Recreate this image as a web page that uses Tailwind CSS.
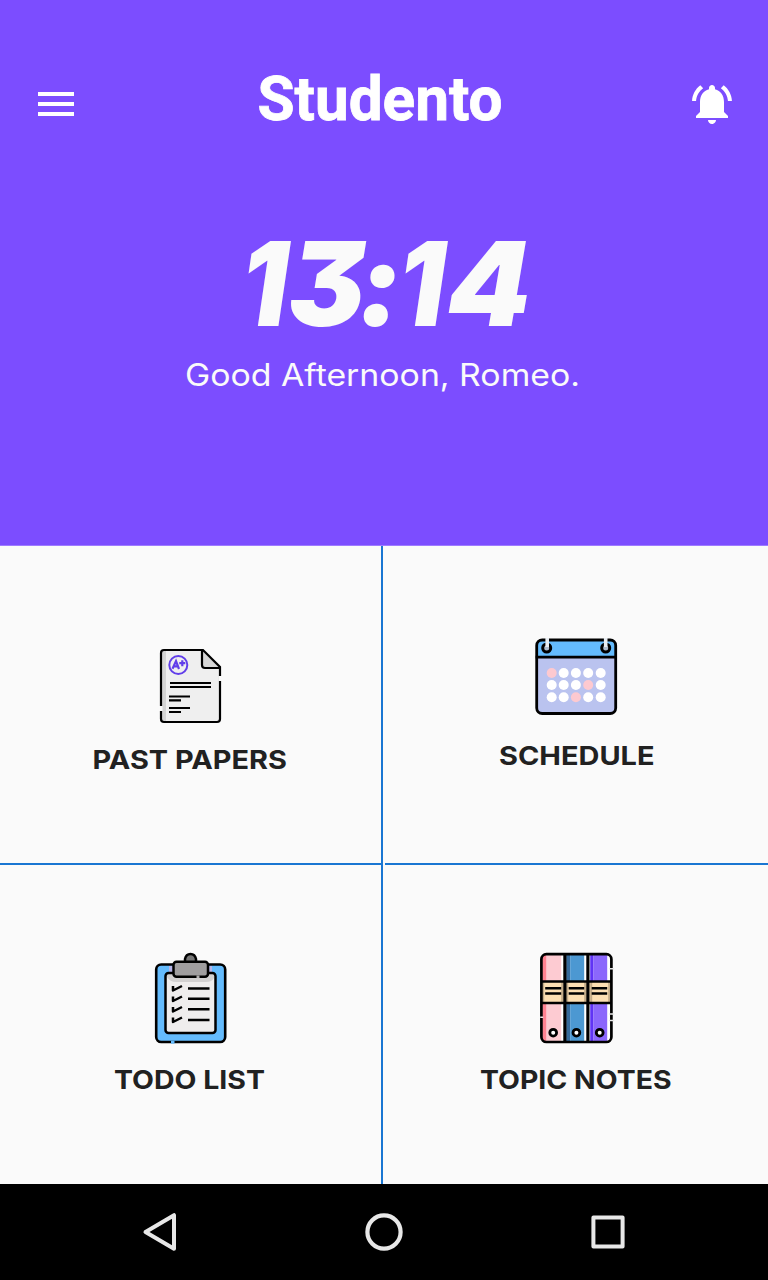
<!DOCTYPE html>
<html lang="en">
<head>
<meta charset="utf-8">
<title>Studento</title>
<script src="https://cdn.jsdelivr.net/npm/@tailwindcss/browser@4"></script>
</head>
<body class="w-[768px] h-[1280px] overflow-hidden bg-[#fafafa] font-['Inter',sans-serif] flex flex-col">
<header class="h-[546px] shrink-0 bg-[#7c4dff] border-b border-[#9e7bff] flex flex-col items-center">
  <div class="w-full h-[160px] pt-[60px] flex justify-between px-[32px]">
    <svg class="w-12 h-12 mt-5" viewBox="0 0 48 48" fill="#fff"><path d="M6 12h36v4H6zM6 22h36v4H6zM6 32h36v4H6z"/></svg>
    <svg class="w-[280px] h-[80px]" viewBox="244 60 280 80"><text x="257.5" y="120" textLength="245" lengthAdjust="spacingAndGlyphs" fill="#fff" stroke="#fff" stroke-width="0.8" class="font-['Roboto',sans-serif] font-bold text-[62px]">Studento</text></svg>
    <svg class="w-12 h-12 mt-5" viewBox="0 0 24 24" fill="#fff"><path d="M7.58 4.08L6.15 2.65C3.75 4.48 2.17 7.3 2.03 10.5h2c.15-2.65 1.51-4.97 3.55-6.42zm12.39 6.42h2c-.15-3.2-1.73-6.02-4.12-7.85l-1.42 1.43c2.02 1.45 3.39 3.77 3.54 6.42zM18 11c0-3.07-1.64-5.64-4.5-6.32V4c0-.83-.67-1.5-1.5-1.5s-1.5.67-1.5 1.5v.68C7.63 5.36 6 7.92 6 11v5l-2 2v1h16v-1l-2-2v-5zm-6 11c.14 0 .27-.01.4-.04.65-.14 1.18-.58 1.44-1.18.1-.24.15-.5.15-.78h-4c.01 1.1.9 2 2.01 2z"/></svg>
  </div>
  <svg class="w-[420px] h-[180px] mt-[30px]" viewBox="174 190 420 180"><text y="326" fill="#fafafa" class="text-[117px] font-black italic [font-feature-settings:'cv09','calt'_0]"><tspan x="241" textLength="47" lengthAdjust="spacingAndGlyphs">1</tspan><tspan x="288" textLength="77" lengthAdjust="spacingAndGlyphs">3</tspan><tspan x="357" textLength="45" lengthAdjust="spacingAndGlyphs">:</tspan><tspan x="398" textLength="47" lengthAdjust="spacingAndGlyphs">1</tspan><tspan x="447" textLength="84" lengthAdjust="spacingAndGlyphs">4</tspan></text></svg>
  <svg class="w-[430px] h-[60px] -mt-[30px]" viewBox="169 340 430 60"><text x="185" y="386" textLength="395" lengthAdjust="spacingAndGlyphs" fill="#fafafa" class="text-[31px] font-normal">Good Afternoon, Romeo.</text></svg>
</header>
<main class="h-[638px] shrink-0 grid grid-cols-[383px_383px] gap-x-[2px] grid-rows-[319px_319px]">
  <section class="border-r-2 border-b-2 border-[#1976d2] flex flex-col items-center pt-[89px]">
    <svg class="w-[90px] h-[100px]" viewBox="1 0 90 100">
      <path d="M19 15H58L75 32V84Q75 87 72 87H19Q16 87 16 84V18Q16 15 19 15Z" fill="#efefef"/>
      <path d="M17 16H21V86H17Z" fill="#d4d4d4"/>
      <path d="M57 15V30Q57 33 60 33H75Z" fill="#d7d7d7"/>
      <path d="M75 41V46M75 46V84Q75 87 72 87H19Q16 87 16 84V76M16 71V18Q16 15 19 15H58L75 32V41M57 15V30Q57 33 60 33H75" fill="none" stroke="#000" stroke-width="2.2"/>
      <path d="M73.5 41h4v5h-4zM14.5 71h3v5h-3z" fill="#fafafa"/>
      <path d="M25 48H66M25 52H66M24 61.5H45M24 65.3H36M24 73H45M24 77H36" stroke="#000" stroke-width="2.2"/>
      <circle cx="33.3" cy="30" r="9" fill="none" stroke="#613eea" stroke-width="2"/>
      <path d="M27.5 33.7L31 26 34 34M29 31.4H33.5M34.3 28.2H40.3M37.3 25.2V31.2" fill="none" stroke="#613eea" stroke-width="2.2"/>
    </svg>
    <svg class="w-[240px] h-[44px]" viewBox="70.5 735 240 44"><text x="92" y="769" textLength="194.5" lengthAdjust="spacingAndGlyphs" fill="#212121" class="text-[26px] font-bold">PAST PAPERS</text></svg>
  </section>
  <section class="border-b-2 border-[#1976d2] flex flex-col items-center pt-[82px]">
    <svg class="w-[102px] h-[98px]" viewBox="1.3 0 102 98">
      <rect x="12" y="12" width="79" height="73.5" rx="5" fill="#bac3ef"/>
      <path d="M12 29V17Q12 12 17 12H86Q91 12 91 17V29Z" fill="#64bbfd"/>
      <rect x="12" y="12" width="79" height="73.5" rx="5.5" fill="none" stroke="#000" stroke-width="2.8"/>
      <path d="M11 29.2H91" stroke="#000" stroke-width="2.8"/>
      <g fill="none" stroke="#000" stroke-width="3"><circle cx="22" cy="20" r="4" fill="#aebdd0"/><circle cx="81" cy="20" r="4" fill="#aebdd0"/></g>
      <path d="M22.5 10V19M81 10V19" stroke="#e9eef3" stroke-width="3.6"/>
      <g fill="#fff"><circle cx="39" cy="45" r="5"/><circle cx="51.2" cy="45" r="5"/><circle cx="63.5" cy="45" r="5"/><circle cx="76" cy="45" r="5"/><circle cx="27" cy="57" r="5"/><circle cx="39" cy="57" r="5"/><circle cx="51.2" cy="57" r="5"/><circle cx="76" cy="57" r="5"/><circle cx="27" cy="69.3" r="5"/><circle cx="39" cy="69.3" r="5"/><circle cx="63.5" cy="69.3" r="5"/><circle cx="76" cy="69.3" r="5"/></g>
      <g fill="#fdc9d0"><circle cx="27" cy="45" r="5"/><circle cx="63.5" cy="57" r="5"/><circle cx="51.2" cy="69.3" r="5"/></g>
    </svg>
    <svg class="w-[240px] h-[44px]" viewBox="456.5 726 240 44"><text x="498.5" y="765" textLength="155.5" lengthAdjust="spacingAndGlyphs" fill="#212121" class="text-[26px] font-bold">SCHEDULE</text></svg>
  </section>
  <section class="border-r-2 border-[#1976d2] flex flex-col items-center pt-[78px]">
    <svg class="w-[92px] h-[110px]" viewBox="0 0 92 110">
      <rect x="11.2" y="21.5" width="69" height="77.5" rx="5" fill="#64bbfd" stroke="#000" stroke-width="2.6"/>
      <path d="M24 23H28V29H24ZM63 23H67V29H63Z" fill="#b6b5e9"/>
      <rect x="20.5" y="30" width="50" height="60" rx="3" fill="#efeded"/>
      <path d="M22 31H69V35Q67 39 61 39H31Q25 39 22 34Z" fill="#d3d1d1"/>
      <rect x="20.5" y="30" width="50" height="60" rx="3" fill="none" stroke="#000" stroke-width="2.5"/>
      <path d="M40 18V16Q41 11 45.5 11T51 16V18" fill="#777" stroke="#000" stroke-width="2.5"/>
      <rect x="28.5" y="18.7" width="34.5" height="15" rx="3" fill="#a09e9f" stroke="#000" stroke-width="2.5"/>
      <path d="M51.5 33.8H54.5" stroke="#b3b1b1" stroke-width="2.6"/>
      <path d="M43 45.5H64.5M43 55.8H64.5M43 66.2H64.5M43 77H64.5" stroke="#000" stroke-width="2.4"/>
      <path d="M28 43V47.5L37 43M28 53.5V58L37 53.5M28 64V68.5L37 64M28 74.5V79L37 74.5" fill="none" stroke="#000" stroke-width="2.5" stroke-linejoin="round"/>
      <path d="M26 99.2H29.5" stroke="#64bbfd" stroke-width="3"/>
    </svg>
    <svg class="w-[240px] h-[44px]" viewBox="70.5 1053 240 44"><text x="113.5" y="1089" textLength="151" lengthAdjust="spacingAndGlyphs" fill="#212121" class="text-[26px] font-bold">TODO LIST</text></svg>
  </section>
  <section class="flex flex-col items-center pt-[78px]">
    <svg class="w-[92px] h-[110px]" viewBox="0.8 0 92 110">
      <rect x="11.2" y="11.2" width="70" height="87.8" rx="5" fill="#fff"/>
      <path d="M12 12H17V98H12Z" fill="#ff8291"/><path d="M16 12H31V98H16Z" fill="#fdcbd2"/>
      <path d="M36 12H40V98H36Z" fill="#356a9b"/><path d="M40 12H54V98H40Z" fill="#4c98d2"/>
      <path d="M60 12H63V98H60Z" fill="#6034f5"/><path d="M63 12H77V98H63Z" fill="#8b67fc"/>
      <path d="M12 39H81V60H12Z" fill="#fddfb3"/>
      <path d="M12 39H14V60H12ZM31 39H33V60H31ZM36 39H38V60H36ZM54 39H56V60H54ZM60 39H62V60H60ZM78 39H80V60H78Z" fill="#c4ac89"/>
      <rect x="11.2" y="11.2" width="70" height="87.8" rx="5" fill="none" stroke="#000" stroke-width="2.7"/>
      <path d="M34.7 11V99M57.7 11V99" stroke="#000" stroke-width="3.2"/>
      <path d="M11 38.5H81M11 60H81M15 45.2H31M15 50.5H31M38.5 45.2H54M38.5 50.5H54M61.5 45.2H77M61.5 50.5H77" stroke="#000" stroke-width="2.4"/>
      <g fill="#fff" stroke="#000" stroke-width="2.8"><circle cx="23" cy="89.7" r="3.4"/><circle cx="46.2" cy="89.7" r="3.4"/><circle cx="69.5" cy="89.7" r="3.4"/></g>
      <path d="M79 25.7H84M10 74.2H13M79 71H84M79 77.5H84" stroke="#e8e8e8" stroke-width="1.5"/>
    </svg>
    <svg class="w-[240px] h-[44px]" viewBox="456.5 1053 240 44"><text x="479.5" y="1089" textLength="191.5" lengthAdjust="spacingAndGlyphs" fill="#212121" class="text-[26px] font-bold">TOPIC NOTES</text></svg>
  </section>
</main>
<nav class="h-[96px] shrink-0 bg-black flex items-center justify-between px-[136px]">
  <svg class="w-12 h-12" viewBox="0 0 48 48" fill="none" stroke="#e8e8e8" stroke-width="4" stroke-linejoin="round"><path d="M38 7.2V40.8L9.5 24Z"/></svg>
  <svg class="w-12 h-12" viewBox="0 0 48 48" fill="none" stroke="#e8e8e8" stroke-width="4.2"><circle cx="24" cy="24" r="16.6"/></svg>
  <svg class="w-12 h-12" viewBox="0 0 48 48" fill="none" stroke="#e8e8e8" stroke-width="4" stroke-linejoin="round"><rect x="9.4" y="9.4" width="29.2" height="29.2"/></svg>
</nav>
</body>
</html>
